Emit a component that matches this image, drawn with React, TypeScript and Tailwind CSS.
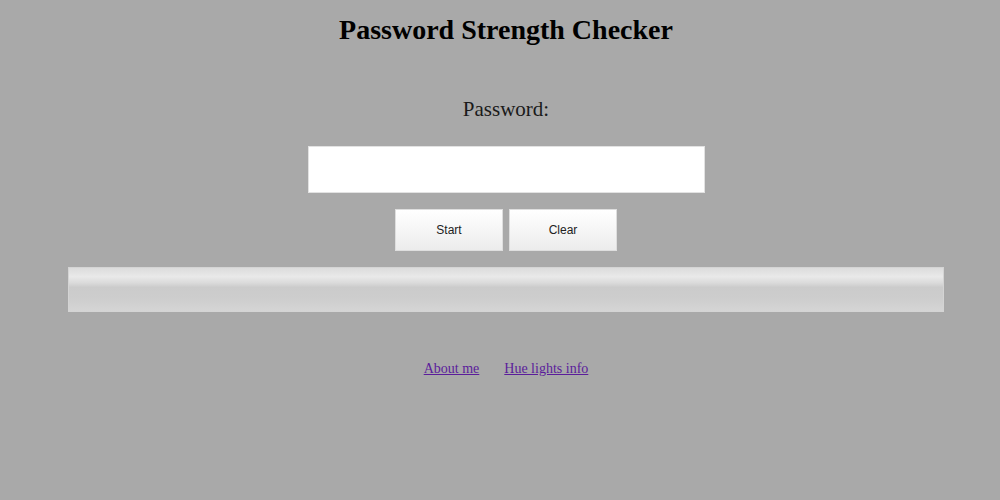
export default function App() {
  return (
    <div className="min-h-[500px] bg-[#a9a9a9] pl-3 pt-[13px] font-['Liberation_Serif',serif] text-black">
      <h1 className="text-center text-[28px] font-bold leading-[34px]">Password Strength Checker</h1>

      <div className="mt-[50px] text-center text-[21px] leading-[24px] text-[#1a1a1a]">Password:</div>

      <div className="mt-[25px] flex justify-center">
        <input
          type="password"
          className="h-[47px] w-[397px] border border-[#e2e2e2] bg-white outline-none"
        />
      </div>

      <div className="mt-4 flex justify-center gap-[6px]">
        <button className="h-[42px] w-[108px] border border-[#dedede] bg-gradient-to-b from-white to-[#ececec] font-['Liberation_Sans',sans-serif] text-[12px] text-[#222]">
          Start
        </button>
        <button className="h-[42px] w-[108px] border border-[#dedede] bg-gradient-to-b from-white to-[#ececec] font-['Liberation_Sans',sans-serif] text-[12px] text-[#222]">
          Clear
        </button>
      </div>

      <div className="mt-4 flex justify-center">
        <div className="h-[45px] w-[876px] border border-[#d4d4d4] bg-[linear-gradient(to_bottom,#dcdcdc_0%,#e9e9e9_20%,#dadada_35%,#cbcbcb_45%,#cdcdcd_70%,#d5d5d5_100%)]" />
      </div>

      <div className="mt-[48px] flex justify-center gap-[25px] text-[14px] leading-[18px]">
        <a href="#" className="text-[#5b1d9b] underline">About me</a>
        <a href="#" className="text-[#5b1d9b] underline">Hue lights info</a>
      </div>
    </div>
  );
}
